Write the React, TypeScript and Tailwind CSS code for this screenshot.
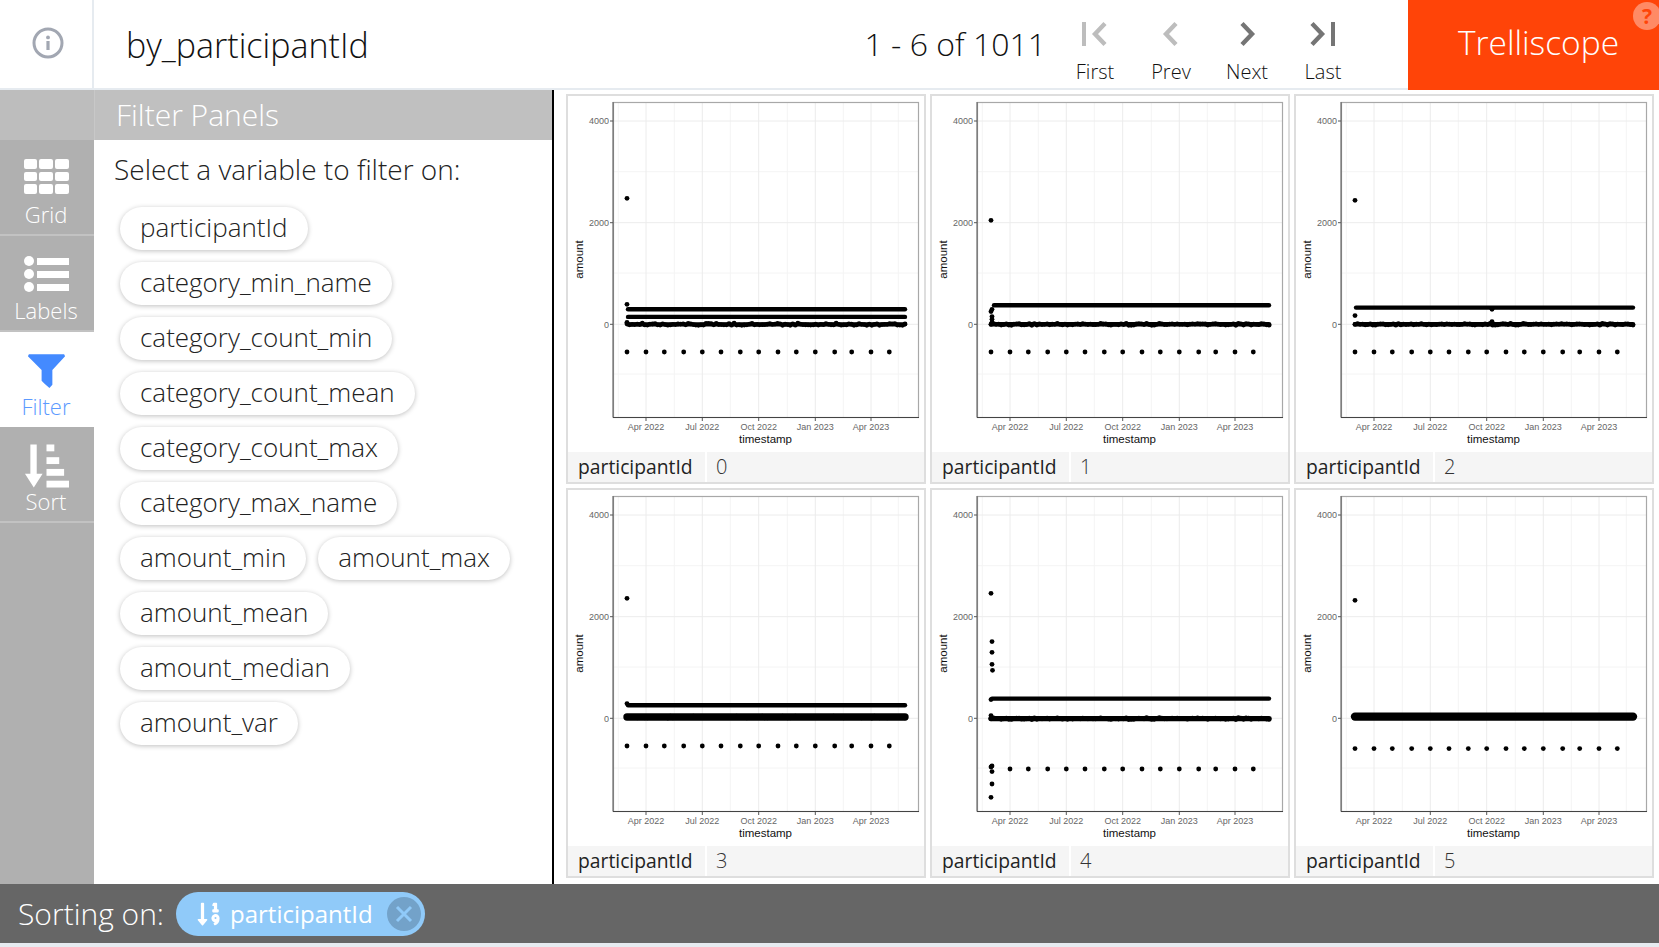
import { FaSortNumericDown } from "react-icons/fa";

type Band = { y: number; width: number; jitter?: number; from?: number };
type Dot = [number, number];
type PanelData = {
  id: string;
  bands: Band[];
  outliers: Dot[];
  lowY: number;
  lowFrom?: number;
};

const filterVars = [
  ["participantId"],
  ["category_min_name"],
  ["category_count_min"],
  ["category_count_mean"],
  ["category_count_max"],
  ["category_max_name"],
  ["amount_min", "amount_max"],
  ["amount_mean"],
  ["amount_median"],
  ["amount_var"],
];

const panels: PanelData[] = [
  {
    id: "0",
    bands: [
      { y: 15, width: 4.4, from: 60 },
      { y: 7.4, width: 4.4, from: 60 },
      { y: 0, width: 4.2, jitter: 1.1 },
    ],
    outliers: [[59, 126], [59, 20], [59, 2]],
    lowY: 27.7,
  },
  {
    id: "1",
    bands: [
      { y: 19, width: 4.4, from: 62 },
      { y: 0, width: 4.6, jitter: 1 },
    ],
    outliers: [[59, 104], [59, 12.7], [60, 15], [60, 7.7], [60, 5], [60, 2]],
    lowY: 27.7,
  },
  {
    id: "2",
    bands: [
      { y: 16.7, width: 4.4, from: 60 },
      { y: 0, width: 4.6, jitter: 0.9 },
    ],
    outliers: [[59, 124], [59, 8.7], [196, 15], [196, 2.7]],
    lowY: 27.7,
  },
  {
    id: "3",
    bands: [
      { y: 13, width: 4.4, from: 60 },
      { y: 1.3, width: 7.4, jitter: 1 },
    ],
    outliers: [[59, 120], [59, 14.7]],
    lowY: 27.7,
  },
  {
    id: "4",
    bands: [
      { y: 19.7, width: 4.4, from: 60 },
      { y: -0.3, width: 5.4, jitter: 0.9 },
    ],
    outliers: [
      [59, 125], [60, 76.7], [60, 66], [60, 54], [60.5, 48], [59, 18.7], [59, 2.7],
      [60, -47.7], [59, -48.7], [60, -53.3], [60, -65.7], [59, -79],
    ],
    lowY: 50.7,
    lowFrom: 1,
  },
  {
    id: "5",
    bands: [{ y: 1.7, width: 8.4, jitter: 0.8 }],
    outliers: [[59, 118]],
    lowY: 30.3,
  },
];

const lowXs = [59, 78, 96.3, 115.7, 134.3, 153, 172.3, 190.7, 210, 228.3, 247.3, 266.7, 283.7, 303, 321.3];
const majorX = [
  { x: 78, label: "Apr 2022" },
  { x: 134.3, label: "Jul 2022" },
  { x: 190.7, label: "Oct 2022" },
  { x: 247.3, label: "Jan 2023" },
  { x: 303, label: "Apr 2023" },
];
const minorX = [50.3, 106.3, 162.3, 219.3, 275.3, 330.3];
const majorY = [
  { y: 25, label: "4000" },
  { y: 126.7, label: "2000" },
  { y: 228.3, label: "0" },
];
const minorY = [75.7, 177, 278];

// small repeatable noise so the jittered band stays the same between runs
function noise(i: number) {
  const v = Math.sin(i * 12.9898) * 43758.5453;
  return v - Math.floor(v);
}

function Plot({ data }: { data: PanelData }) {
  const zero = 228.3;
  const axisFont = { fontFamily: "'Liberation Sans', Arial, sans-serif" };
  return (
    <svg width={356} height={356} viewBox="0 0 356 356" className="block">
      {minorY.map(y => (
        <line key={y} x1={45} x2={350} y1={y} y2={y} stroke="#f4f4f4" />
      ))}
      {minorX.map(x => (
        <line key={x} x1={x} x2={x} y1={6} y2={321} stroke="#f4f4f4" />
      ))}
      {majorY.map(t => (
        <line key={t.y} x1={45} x2={350} y1={t.y} y2={t.y} stroke="#ececec" />
      ))}
      {majorX.map(t => (
        <line key={t.x} x1={t.x} x2={t.x} y1={6} y2={321} stroke="#ececec" />
      ))}

      {data.bands.map((b, i) => (
        <g key={i}>
          <line
            x1={b.from ?? 59}
            x2={337}
            y1={zero - b.y}
            y2={zero - b.y}
            stroke="#000"
            strokeWidth={b.width}
            strokeLinecap="round"
          />
          {b.jitter
            ? Array.from({ length: 110 }, (_, k) => (
                <circle
                  key={k}
                  cx={59 + (k / 109) * 278}
                  cy={zero - b.y + (noise(k + i * 200) - 0.5) * 2 * b.jitter!}
                  r={2.4}
                  fill="#000"
                />
              ))
            : null}
        </g>
      ))}
      {lowXs.slice(data.lowFrom ?? 0).map(x => (
        <circle key={x} cx={x} cy={zero + data.lowY} r={2.4} fill="#000" />
      ))}
      {data.outliers.map(([x, y], i) => (
        <circle key={i} cx={x} cy={zero - y} r={2.4} fill="#000" />
      ))}

      <rect x={45.5} y={6.5} width={305} height={315} fill="none" stroke="#a8a8a8" strokeWidth={1.2} />
      <line x1={45} x2={45} y1={6} y2={321.5} stroke="#555" />
      <line x1={45} x2={351} y1={321.5} y2={321.5} stroke="#444" />

      {majorY.map(t => (
        <g key={t.label}>
          <line x1={42} x2={45} y1={t.y} y2={t.y} stroke="#555" />
          <text x={41} y={t.y + 3.2} textAnchor="end" fontSize={9} fill="#666" style={axisFont}>
            {t.label}
          </text>
        </g>
      ))}
      {majorX.map(t => (
        <g key={t.label}>
          <line x1={t.x} x2={t.x} y1={322} y2={325} stroke="#555" />
          <text x={t.x} y={334} textAnchor="middle" fontSize={9} fill="#666" style={axisFont}>
            {t.label}
          </text>
        </g>
      ))}
      <text x={197.5} y={347} textAnchor="middle" fontSize={11.5} fill="#111" style={axisFont}>
        timestamp
      </text>
      <text
        transform="translate(14.5 163.5) rotate(-90)"
        textAnchor="middle"
        fontSize={11.5}
        fill="#111"
        style={axisFont}
      >
        amount
      </text>
    </svg>
  );
}

function Panel({ data }: { data: PanelData }) {
  return (
    <div className="w-[360px] h-[390px] border-2 border-[#dedede] bg-white flex flex-col">
      <Plot data={data} />
      <div className="h-[30px] flex gap-[2px] text-[19.3px] leading-[30px]">
        <div className="w-[137px] bg-[#f5f5f5] pl-[10px] text-[#222]">participantId</div>
        <div className="flex-1 bg-[#f5f5f5] pl-[9px] text-[20px] font-light text-[#333]">{data.id}</div>
      </div>
    </div>
  );
}

function NavTile({
  label,
  active,
  tight,
  children,
}: {
  label: string;
  active?: boolean;
  tight?: boolean;
  children: React.ReactNode;
}) {
  return (
    <div
      className={
        active
          ? "h-[95px] bg-white flex flex-col items-center pt-[21px] pr-[2px] text-[#5c9aff]"
          : "h-[96px] border-b-2 border-[#c2c2c2] flex flex-col items-center pt-[19px] pr-[2px] text-white"
      }
    >
      <div className="h-[36px] w-[45px]">{children}</div>
      <div className={tight ? "text-[22px] leading-[30px] font-light mt-[2px]" : "text-[22px] leading-[30px] font-light mt-[4px]"}>
        {label}
      </div>
    </div>
  );
}

function Chevron({ dir, color, bar }: { dir: "left" | "right"; color: string; bar?: boolean }) {
  const first = dir === "left";
  return (
    <svg width={28} height={26} viewBox="0 0 28 26" fill="none" className="block">
      {first ? (
        bar ? (
          <>
            <rect x={1} y={1} width={4} height={24} fill={color} />
            <path d="M24 2.5 L14 13 L24 23.5" stroke={color} strokeWidth={4.4} />
          </>
        ) : (
          <path d="M19 2.5 L9 13 L19 23.5" stroke={color} strokeWidth={4.4} />
        )
      ) : bar ? (
        <>
          <path d="M3 2.5 L13 13 L3 23.5" stroke={color} strokeWidth={4.4} />
          <rect x={22} y={1} width={4} height={24} fill={color} />
        </>
      ) : (
        <path d="M9 2.5 L19 13 L9 23.5" stroke={color} strokeWidth={4.4} />
      )}
    </svg>
  );
}

const pager = [
  { label: "First", dir: "left" as const, color: "#bdbdbd", bar: true },
  { label: "Prev", dir: "left" as const, color: "#bdbdbd", bar: false },
  { label: "Next", dir: "right" as const, color: "#757575", bar: false },
  { label: "Last", dir: "right" as const, color: "#757575", bar: true },
];

export default function App() {
  return (
    <div className="w-[1659px] h-[947px] overflow-hidden flex flex-col bg-white font-['Open_Sans',sans-serif] text-[#111]">
      {/* Header */}
      <header className="h-[90px] flex border-b-2 border-[#e6ebf0]">
        <div className="w-[94px] border-r-2 border-[#e6ebf0] flex items-center justify-center pb-[2px] pl-[4px]">
          <svg width={32} height={32} viewBox="0 0 32 32" fill="none">
            <circle cx={16} cy={16} r={14} stroke="#a2a7b2" strokeWidth={3} />
            <rect x={14.4} y={14} width={3.2} height={9} fill="#a2a7b2" />
            <circle cx={16} cy={10.4} r={1.9} fill="#a2a7b2" />
          </svg>
        </div>
        <div className="flex-1 pl-[32px] text-[34px] leading-[90px] font-light">by_participantId</div>
        <div className="text-[32px] leading-[88px] font-light pr-[11px]">1 - 6 of 1011</div>
        <div className="flex mr-[47px]">
          {pager.map(p => (
            <div key={p.label} className="w-[76px] flex flex-col items-center pt-[21px]">
              <Chevron dir={p.dir} color={p.color} bar={p.bar} />
              <div className="text-[20px] leading-[26px] font-light mt-[12px]">{p.label}</div>
            </div>
          ))}
        </div>
        <div className="relative w-[251px] h-[90px] bg-[#ff4408] text-white text-[33.5px] font-light leading-[84px] text-center pl-[10px]">
          Trelliscope
          <div className="absolute left-[225px] top-[2px] w-[28px] h-[28px] rounded-full bg-[#ff8a65] text-[#ff4408] text-[21px] font-bold leading-[28px] text-center">
            ?
          </div>
        </div>
      </header>

      {/* Body */}
      <div className="flex-1 flex min-h-0">
        <nav className="w-[94px] bg-[#b0b0b0] flex flex-col">
          <div className="h-[50px] bg-[#bdbdbd]" />
          <NavTile label="Grid">
            <div className="grid grid-cols-3 gap-x-[2px] gap-y-[3px] h-[35px]">
              {Array.from({ length: 9 }, (_, i) => (
                <div key={i} className="bg-white rounded-[2px]" />
              ))}
            </div>
          </NavTile>
          <NavTile label="Labels">
            <div className="flex flex-col gap-[3px] pt-[1px]">
              {[0, 1, 2].map(i => (
                <div key={i} className="flex items-center gap-[3px] h-[10px]">
                  <div className="w-[10px] h-[10px] rounded-full bg-white" />
                  <div className="flex-1 h-[7px] bg-white" />
                </div>
              ))}
            </div>
          </NavTile>
          <NavTile label="Filter" active tight>
            <svg width={45} height={36} viewBox="0 0 46 36">
              <path d="M5 1 H41 L42 3 L29 17 V32 L26 35.5 L21 31 L18 28 V17 L4 3 Z" fill="#448aff" />
            </svg>
          </NavTile>
          <NavTile label="Sort">
            <svg width={45} height={44} viewBox="0 0 46 44" fill="#fff" className="-mt-[2px]">
              <path d="M6.5 0 H13 V30 H19 L10 44 L1 30 H6.5 Z" />
              <rect x={23} y={0} width={8} height={7} />
              <rect x={23} y={13} width={13} height={7} />
              <rect x={23} y={25} width={18} height={7} />
              <rect x={23} y={37} width={23} height={7} />
            </svg>
          </NavTile>
        </nav>

        <aside className="w-[460px] border-r-2 border-black flex flex-col">
          <div className="h-[50px] bg-[#c0c0c0] border-l border-[#c8c8c8] pl-[21px] text-white text-[30px] font-light leading-[50px]">
            Filter Panels
          </div>
          <div className="pl-[20px] pt-[10px] text-[28px] font-light leading-[38px] text-[#222]">
            Select a variable to filter on:
          </div>
          <div className="pl-[26px] pt-[19px] flex flex-col gap-[12px]">
            {filterVars.map(row => (
              <div key={row[0]} className="flex gap-[12px]">
                {row.map(name => (
                  <div
                    key={name}
                    className="h-[43px] px-[20px] rounded-[22px] bg-white text-[26px] font-light leading-[41px] text-[#222] shadow-[0_1px_5px_rgba(0,0,0,0.25)]"
                  >
                    {name}
                  </div>
                ))}
              </div>
            ))}
          </div>
        </aside>

        <main className="flex-1 pl-[12px] pt-[4px]">
          <div className="grid grid-cols-[360px_360px_360px] grid-rows-[390px_390px] gap-[4px]">
            {panels.map(p => (
              <Panel key={p.id} data={p} />
            ))}
          </div>
        </main>
      </div>

      {/* Footer */}
      <footer className="h-[59px] bg-[#666666] flex items-center pl-[18px] text-white">
        <span className="text-[30px] font-light mr-[12px]">Sorting on:</span>
        <div className="h-[44px] w-[249px] rounded-[22px] bg-[#90caf9] flex items-center pl-[20px]">
          <FaSortNumericDown size={26} className="text-white" />
          <span className="text-[24px] ml-[8px]">participantId</span>
          <div className="ml-[14px] w-[34px] h-[34px] rounded-full bg-[#73a2c9] flex items-center justify-center">
            <svg width={22} height={22} viewBox="0 0 22 22" stroke="#90caf9" strokeWidth={3}>
              <path d="M4 4 L18 18 M18 4 L4 18" />
            </svg>
          </div>
        </div>
      </footer>
      <div className="h-[4px] bg-[#e6ebf0]" />
    </div>
  );
}
